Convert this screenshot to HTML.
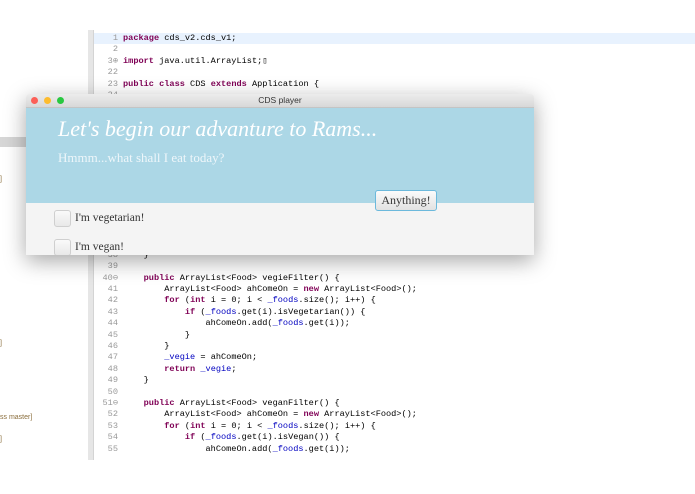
<!DOCTYPE html>
<html><head><meta charset="utf-8"><style>
body{margin:0;width:695px;height:494px;background:#fff;position:relative;overflow:hidden;font-family:"Liberation Sans",sans-serif}
.vl{position:absolute;left:88px;top:30px;width:5px;height:430px;background:#e6e6e6}
.vl2{position:absolute;left:93px;top:30px;width:1px;height:430px;background:#d4d4d4}
.hl{position:absolute;left:94px;top:33px;width:601px;height:11px;background:#e8f2fe}
.code{position:absolute;left:100px;top:33px;font-family:"Liberation Mono",monospace;font-size:8.6px;line-height:11.4px;color:#000;white-space:pre}
.n{display:inline-block;width:18px;text-align:right;color:#999;margin-right:5px}
.k{color:#7f0055;font-weight:bold}
.f{color:#0000c0}
.dlg{position:absolute;left:26px;top:94px;width:508px;height:161px;box-shadow:0 6px 22px rgba(0,0,0,.35);border-radius:4px 4px 0 0;overflow:hidden;background:#f4f4f4}
.tb{height:13px;background:linear-gradient(#ececec,#d8d8d8);border-bottom:1px solid #c4c4c4;font-size:8.5px;text-align:center;line-height:13px;color:#333}
.dot{position:absolute;top:3px;width:7px;height:7px;border-radius:50%}
.blue{position:absolute;top:14px;left:0;width:508px;height:95px;background:#acd7e6}
.h1{position:absolute;left:32px;top:8px;font-family:"Liberation Serif",serif;font-style:italic;font-size:22px;color:#fff}
.h2{position:absolute;left:32px;top:42px;font-family:"Liberation Serif",serif;font-size:13px;color:#eef6fa}
.btn{position:absolute;left:349px;top:96px;width:60px;height:19px;border:1px solid #6cb9dc;border-radius:3px;background:linear-gradient(#fbfbfb,#e2e2e2);font-family:"Liberation Serif",serif;font-size:12px;text-align:center;line-height:19px;color:#333}
.cb{position:absolute;left:28px;width:15px;height:15px;border:1px solid #cfcfcf;border-radius:3px;background:linear-gradient(#fafafa,#e8e8e8)}
.lb{position:absolute;left:49px;font-family:"Liberation Serif",serif;font-size:11.5px;color:#333}
.side{position:absolute;left:0;top:137px;width:26px;height:10px;background:#d6d6d6}
.st{position:absolute;left:0;font-size:7px;color:#8a6d3b}
</style></head><body>
<div class="side"></div>
<div class="st" style="top:176px">]</div>
<div class="st" style="top:340px">]</div>
<div class="st" style="top:414px">ss master]</div>
<div class="st" style="top:436px">]</div>
<div class="vl"></div><div class="vl2"></div>
<div class="hl"></div>
<div class="code"><span class="n">1</span><span class="k">package</span> cds_v2.cds_v1;
<span class="n">2</span>
<span class="n">3⊕</span><span class="k">import</span> java.util.ArrayList;▯
<span class="n">22</span>
<span class="n">23</span><span class="k">public class</span> CDS <span class="k">extends</span> Application {
<span class="n">24</span>
<span class="n"></span>
<span class="n"></span>
<span class="n"></span>
<span class="n"></span>
<span class="n"></span>
<span class="n"></span>
<span class="n"></span>
<span class="n"></span>
<span class="n"></span>
<span class="n"></span>
<span class="n"></span>
<span class="n"></span>
<span class="n"></span>
<span class="n">38</span>    }
<span class="n">39</span>
<span class="n">40⊖</span>    <span class="k">public</span> ArrayList&lt;Food&gt; vegieFilter() {
<span class="n">41</span>        ArrayList&lt;Food&gt; ahComeOn = <span class="k">new</span> ArrayList&lt;Food&gt;();
<span class="n">42</span>        <span class="k">for</span> (<span class="k">int</span> i = 0; i &lt; <span class="f">_foods</span>.size(); i++) {
<span class="n">43</span>            <span class="k">if</span> (<span class="f">_foods</span>.get(i).isVegetarian()) {
<span class="n">44</span>                ahComeOn.add(<span class="f">_foods</span>.get(i));
<span class="n">45</span>            }
<span class="n">46</span>        }
<span class="n">47</span>        <span class="f">_vegie</span> = ahComeOn;
<span class="n">48</span>        <span class="k">return</span> <span class="f">_vegie</span>;
<span class="n">49</span>    }
<span class="n">50</span>
<span class="n">51⊖</span>    <span class="k">public</span> ArrayList&lt;Food&gt; veganFilter() {
<span class="n">52</span>        ArrayList&lt;Food&gt; ahComeOn = <span class="k">new</span> ArrayList&lt;Food&gt;();
<span class="n">53</span>        <span class="k">for</span> (<span class="k">int</span> i = 0; i &lt; <span class="f">_foods</span>.size(); i++) {
<span class="n">54</span>            <span class="k">if</span> (<span class="f">_foods</span>.get(i).isVegan()) {
<span class="n">55</span>                ahComeOn.add(<span class="f">_foods</span>.get(i));</div>
<div style="position:absolute;left:0;top:460px;width:695px;height:34px;background:#fff"></div>
<div class="dlg">
<div class="tb">CDS player</div>
<div class="dot" style="left:5px;background:#fc5f57"></div>
<div class="dot" style="left:18px;background:#fdbc2e"></div>
<div class="dot" style="left:31px;background:#28c840"></div>
<div class="blue">
<div class="h1">Let's begin our advanture to Rams...</div>
<div class="h2">Hmmm...what shall I eat today?</div>
</div>
<div class="btn">Anything!</div>
<div class="cb" style="top:116px"></div><div class="lb" style="top:118px">I'm vegetarian!</div>
<div class="cb" style="top:145px"></div><div class="lb" style="top:147px">I'm vegan!</div>
</div>
</body></html>
